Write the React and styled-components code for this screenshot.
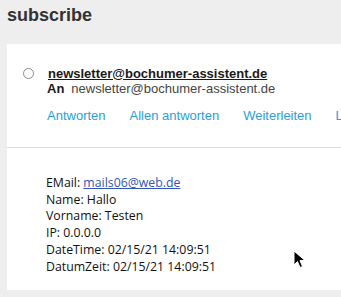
import React from "react";
import styled, { createGlobalStyle } from "styled-components";

const GlobalStyle = createGlobalStyle`
  html, body {
    margin: 0;
    padding: 0;
    background: #eeeeee;
  }
`;

const Page = styled.div`
  position: relative;
  width: 341px;
  height: 297px;
  overflow: hidden;
  padding: 0 0 0 7px;
  box-sizing: border-box;
  font-family: "Liberation Sans", Arial, sans-serif;
`;

const Title = styled.h1`
  margin: 0;
  padding-top: 4px;
  height: 40px;
  font-size: 18px;
  line-height: 22px;
  font-weight: bold;
  color: #333333;
`;

const Card = styled.div`
  width: 420px;
  height: 246px;
  background: #ffffff;
`;

const Header = styled.div`
  height: 104px;
  box-sizing: border-box;
  padding: 21px 0 0 16px;
  border-bottom: 1px solid #dddddd;
`;

const SenderRow = styled.div`
  display: flex;
  align-items: center;
  gap: 14px;
  height: 16px;
`;

const Radio = styled.span`
  width: 9px;
  height: 9px;
  border: 1px solid #8a8a8a;
  border-radius: 50%;
`;

const Sender = styled.span`
  font-size: 13px;
  font-weight: bold;
  color: #1a1a1a;
  text-decoration: underline;
`;

const Recipient = styled.div`
  margin-left: 24px;
  font-size: 13px;
  line-height: 16px;
  color: #444444;

  b {
    color: #1a1a1a;
    margin-right: 7px;
  }
`;

const Actions = styled.div`
  display: flex;
  gap: 24px;
  margin: 11px 0 0 24px;
`;

const Action = styled.a`
  font-size: 13px;
  line-height: 16px;
  color: #2aa0d8;
  text-decoration: none;
  white-space: nowrap;
`;

const Body = styled.div`
  padding: 27px 0 0 39px;
  font-family: "Open Sans", "Noto Sans", sans-serif;
  font-size: 12.3px;
  line-height: 16.7px;
  color: #111111;
`;

const MailLink = styled.a`
  color: #3355bb;
  text-decoration: underline;
`;

const Cursor = styled.svg`
  position: absolute;
  left: 293px;
  top: 250px;
`;

const fields = [
  ["Name", "Hallo"],
  ["Vorname", "Testen"],
  ["IP", "0.0.0.0"],
  ["DateTime", "02/15/21 14:09:51"],
  ["DatumZeit", "02/15/21 14:09:51"],
];

export default function App() {
  return (
    <Page>
      <GlobalStyle />
      <Title>subscribe</Title>
      <Card>
        <Header>
          <SenderRow>
            <Radio />
            <Sender>newsletter@bochumer-assistent.de</Sender>
          </SenderRow>
          <Recipient>
            <b>An</b>newsletter@bochumer-assistent.de
          </Recipient>
          <Actions>
            <Action>Antworten</Action>
            <Action>Allen antworten</Action>
            <Action>Weiterleiten</Action>
            <Action>Löschen</Action>
          </Actions>
        </Header>
        <Body>
          <div>
            EMail: <MailLink>mails06@web.de</MailLink>
          </div>
          {fields.map(([k, v]) => (
            <div key={k}>
              {k}: {v}
            </div>
          ))}
        </Body>
      </Card>
      <Cursor width="14" height="20" viewBox="0 0 14 20">
        <path
          d="M1 1 L1 15 L4.5 11.5 L7 17.5 L9.5 16.5 L7 10.5 L12 10.5 Z"
          fill="#000"
          stroke="#fff"
          strokeWidth="1"
        />
      </Cursor>
    </Page>
  );
}
